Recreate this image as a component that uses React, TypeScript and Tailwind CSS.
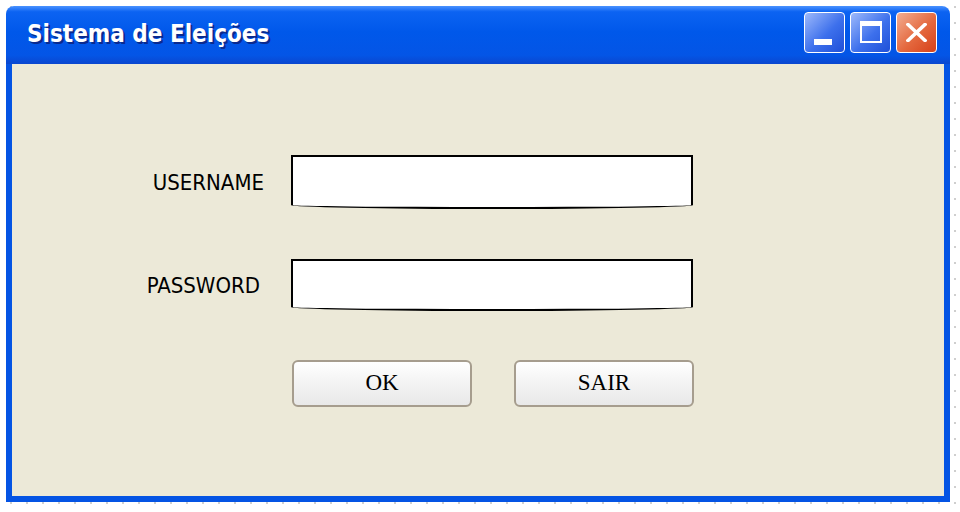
import { ReactNode } from "react";

const labelFont = { fontFamily: '"DejaVu Sans Condensed", "DejaVu Sans", sans-serif' };

const TitleButton = ({ close, children }: { close?: boolean; children: ReactNode }) => (
  <div
    className={
      "w-[41px] h-[41px] rounded-[4px] border-[1.5px] border-white relative overflow-hidden " +
      (close
        ? "bg-[linear-gradient(135deg,#f3ae92_0%,#e4683e_55%,#d6411a_100%)]"
        : "bg-[linear-gradient(135deg,#9db9fb_0%,#3d70ec_55%,#1f50d8_100%)]")
    }
  >
    {children}
  </div>
);

const Field = ({ h }: { h: string }) => (
  <div
    className={
      "w-[402px] border-2 border-black bg-white rounded-bl-[50%_4px] rounded-br-[50%_4px] " + h
    }
  />
);

const FormButton = ({ label }: { label: string }) => (
  <button
    className="w-[180px] h-[47px] rounded-[6px] border-2 border-[#a69d8e] bg-linear-to-b from-white via-[#f3f3f3] to-[#e8e8e8] text-[23px] text-black flex items-center justify-center"
    style={{ fontFamily: '"Liberation Serif", serif' }}
  >
    {label}
  </button>
);

export default function App() {
  return (
    <div className="w-[960px] h-[512px] bg-white bg-[radial-gradient(circle,#cfcfcf_1.1px,transparent_1.3px)] bg-[size:16px_16px] bg-[position:3px_-1px] pt-[6px] pl-[6px]">
      <div className="w-[944px] h-[496px] flex flex-col rounded-t-[8px] overflow-hidden">
        {/* title bar */}
        <div className="h-[58px] flex items-center pl-[21px] pr-[13px] bg-[linear-gradient(to_bottom,#4a92ff_0%,#0c63f2_10%,#0058ea_45%,#0455e6_85%,#0a47cf_100%)]">
          <span
            className="flex-1 text-white font-bold text-[24px] -mt-[2px] [text-shadow:2px_2px_0_#0a2a8f]"
            style={labelFont}
          >
            Sistema de Eleições
          </span>
          <div className="flex gap-[5px] -mt-[5px]">
            <TitleButton>
              <div className="absolute left-[9px] top-[26px] w-[18px] h-[6px] bg-white" />
            </TitleButton>
            <TitleButton>
              <div className="absolute left-[9px] top-[8px] w-[22px] h-[22px] border-2 border-t-[5px] border-white" />
            </TitleButton>
            <TitleButton close>
              <svg className="absolute left-[9px] top-[10px]" width="21" height="19" viewBox="0 0 21 19">
                <path d="M2 1.5 L19 17.5 M19 1.5 L2 17.5" stroke="white" strokeWidth="3.6" strokeLinecap="square" />
              </svg>
            </TitleButton>
          </div>
        </div>

        {/* body */}
        <div className="flex-1 border-x-[6px] border-b-[6px] border-[#0454e4] bg-[#ece9d8] pt-[91px] flex flex-col">
          <div className="flex items-center h-[54px]">
            <span className="w-[252px] text-right text-[22px] text-black" style={labelFont}>
              USERNAME
            </span>
            <div className="ml-[27px]">
              <Field h="h-[54px]" />
            </div>
          </div>
          <div className="flex items-center h-[52px] mt-[50px]">
            <span className="w-[248px] text-right text-[22px] text-black" style={labelFont}>
              PASSWORD
            </span>
            <div className="ml-[31px]">
              <Field h="h-[52px]" />
            </div>
          </div>
          <div className="flex mt-[49px] pl-[280px] gap-[42px]">
            <FormButton label="OK" />
            <FormButton label="SAIR" />
          </div>
        </div>
      </div>
    </div>
  );
}
